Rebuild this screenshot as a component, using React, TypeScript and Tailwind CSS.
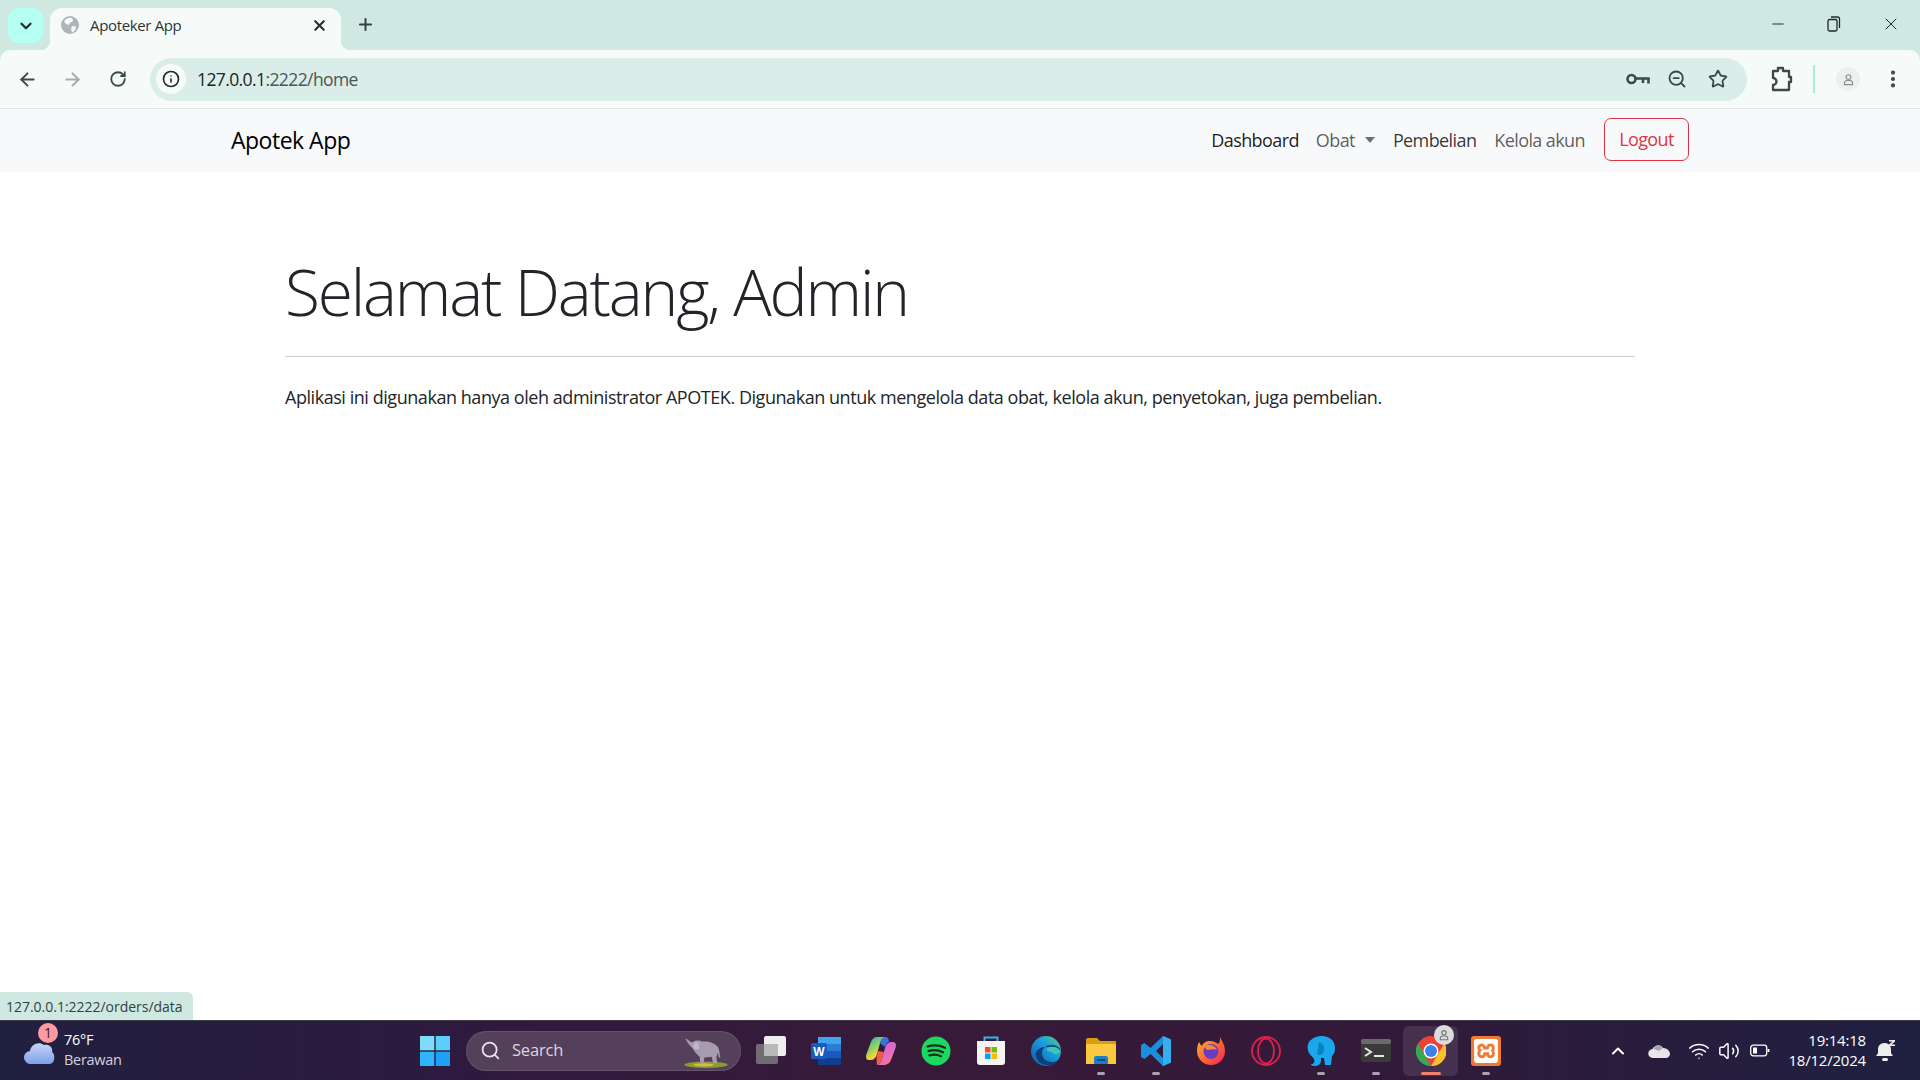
import { Search, ArrowLeft, ArrowRight, RotateCw, Info, ChevronDown, X, Plus, Minus, ZoomOut, Star, EllipsisVertical, ChevronUp, Wifi, Volume2 } from "lucide-react";
import { SiXampp } from "react-icons/si";

const font = "font-['Open_Sans','Liberation_Sans',sans-serif]";

function ChromeTabs() {
  return (
    <div className="relative flex h-[50px] items-start pt-2">
      <button className="ml-2 flex h-[35px] w-[35px] items-center justify-center rounded-[10px] bg-[#b5fff3] text-[#1f2f2c]">
        <ChevronDown size={18} strokeWidth={3} />
      </button>
      <div className="relative ml-[7px] flex h-[42px] w-[291px] items-center rounded-t-[12px] bg-[#f6fbf9] pb-[8px] pl-[11px] pr-3">
        <div className="absolute -left-[10px] bottom-0 h-[10px] w-[10px] bg-[radial-gradient(circle_at_0_0,#cfe8e2_10px,#f6fbf9_10.5px)]" />
        <div className="absolute -right-[10px] bottom-0 h-[10px] w-[10px] bg-[radial-gradient(circle_at_100%_0,#cfe8e2_10px,#f6fbf9_10.5px)]" />
        <svg width="18" height="18" viewBox="0 0 18 18">
          <circle cx="9" cy="9" r="9" fill="#aeb4ba" />
          <path d="M9 1.5 12 3 11.5 6 9 6.5 8 9 5 8 3 5.5 5 3ZM11 10l4 .5-1 4-3 2-1-3.500Z" fill="#f6fbf9" />
        </svg>
        <span className="ml-[11px] flex-1 text-[15px] tracking-[-0.35px] text-[#2b3432]">Apoteker App</span>
        <X size={17} strokeWidth={3} className="mr-[1px] text-[#26302e]" />
      </div>
      <Plus size={19} strokeWidth={2.5} className="ml-[15px] mt-[7px] text-[#33423f]" />
      <div className="ml-auto flex items-center pt-[6px] text-[#1f2a28]">
        <Minus size={18} strokeWidth={1.3} className="mr-[39px]" />
        <svg width="16" height="16" viewBox="0 0 16 16" fill="none" stroke="currentColor" strokeWidth="1.3" className="mr-[39px]">
          <rect x="2" y="3.500" width="9" height="11.500" rx="1.500" />
          <path d="M5 1h6.500A2 2 0 0 1 13.500 3v9" />
        </svg>
        <X size={20} strokeWidth={1.2} className="mr-[19px]" />
      </div>
    </div>
  );
}

function ChromeToolbar() {
  return (
    <div className="flex h-[59px] items-center rounded-t-[10px] border-b border-[#dde7e4] bg-[#f6fbf9] text-[#3a4a47]">
      <ArrowLeft size={21} strokeWidth={2.2} className="ml-[17px]" />
      <ArrowRight size={21} strokeWidth={2.2} className="ml-[24px] text-[#a3adab]" />
      <RotateCw size={18} strokeWidth={2.4} className="ml-[26px]" />
      <div className="ml-[23px] flex h-[43px] w-[1597px] items-center rounded-full bg-[#dbede8] pl-[6px]">
        <div className="flex h-[30px] w-[30px] items-center justify-center rounded-full bg-[#f6fbf9]">
          <Info size={18} strokeWidth={2.2} className="text-[#1f2a28]" />
        </div>
        <span className="ml-[11px] flex-1 text-[17.500px] tracking-[-0.6px] text-[#4a5755]">
          <span className="text-[#1d2422]">127.0.0.1</span>:2222/home
        </span>
        <svg width="24" height="16" viewBox="0 0 24 16" fill="none" stroke="currentColor" strokeWidth="2.600" className="mr-[17px]">
          <circle cx="5.500" cy="8" r="4" />
          <path d="M9.500 7.500H22.500V12.500M17 7.500V12" />
        </svg>
        <ZoomOut size={20} strokeWidth={2.2} className="mr-[21px]" />
        <Star size={20} strokeWidth={2.2} className="mr-[19px]" />
      </div>
      <svg width="24" height="26" viewBox="0 0 24 26" fill="none" stroke="currentColor" strokeWidth="2.300" className="ml-[22px]">
        <path d="M4 5h5V2h5v3h6v6h2v5h-2v8H4v-5a3.500 3.500 0 0 0 0-7Z" strokeLinejoin="round" />
      </svg>
      <div className="ml-[20px] h-[28px] w-[2px] bg-[#a5ece2]" />
      <div className="ml-[21px] flex h-[24px] w-[24px] items-center justify-center rounded-full bg-[#eef0f0]">
        <svg width="11" height="15" viewBox="0 0 16 18" fill="none" stroke="#868d8c" strokeWidth="1.600">
          <circle cx="8" cy="5.500" r="3.500" />
          <path d="M2 16.500v-2a4 4 0 0 1 4-4h4a4 4 0 0 1 4 4v2Z" />
        </svg>
      </div>
      <EllipsisVertical size={22} strokeWidth={2.6} className="ml-[22px]" />
    </div>
  );
}

function Navbar() {
  return (
    <nav className="flex h-[63px] items-center justify-between bg-[#f8f9fa] pl-[231px] pr-[231px]">
      <a className="text-[23px] tracking-[-0.5px] text-black">Apotek App</a>
      <div className="flex items-center text-[18px] tracking-[-0.6px] text-black/65">
        <a className="mb-[1px] text-black/90">Dashboard</a>
        <a className="mb-[1px] ml-[17px] flex items-center">
          Obat
          <span className="ml-[10px] h-0 w-0 border-x-[5.500px] border-t-[6px] border-x-transparent border-t-[#6b6e70]" />
        </a>
        <a className="mb-[1px] ml-[18px] text-black/80">Pembelian</a>
        <a className="mb-[1px] ml-[18px]">Kelola akun</a>
        <button className="mb-[2px] ml-[19px] h-[43px] w-[85px] rounded-[7px] border border-[#dc3545] text-[#dc3545]">Logout</button>
      </div>
    </nav>
  );
}

function StatusBubble() {
  return (
    <div className="absolute bottom-0 left-0 flex h-[28px] w-[193px] items-center rounded-tr-[6px] bg-[#cfe8e2] pl-[6px] text-[14px] tracking-[-0.02px] text-[#33423f]">
      127.0.0.1:2222/orders/data
    </div>
  );
}

// taskbar app icons, simplified from the real logos
function TaskIcon({ children, dot, active }: { children: React.ReactNode; dot?: boolean; active?: boolean }) {
  return (
    <div className={`relative flex h-[50px] w-[55px] items-center justify-center rounded-[6px] ${active ? "bg-white/10" : ""}`}>
      {children}
      {dot && (
        <span className={`absolute bottom-[1px] h-[3px] rounded-full ${active ? "w-[20px] bg-[#f5806a]" : "w-[8px] bg-[#a9a3ad]"}`} />
      )}
    </div>
  );
}

function Elephant() {
  return (
    <svg width="50" height="32" viewBox="0 0 56 40">
      <ellipse cx="28" cy="36" rx="27" ry="4" fill="#8d9a2c" />
      <ellipse cx="25" cy="36" rx="13" ry="2" fill="#d0bd4a" />
      <path d="M2 3c3 1 6 4 9 5 3-3 9-3 12-1 7-1 16 1 20 7 2 3 2 9 3 13h-2l-1-6-2 5 1 8h-5l-2-8-9 1-1 7h-4l-1-8-5-5-4-6C6 11 4 6 2 3Z" fill="#a89caf" />
      <path d="M14 8c4-1 7 3 5 8-2 2-6 0-7-3Z" fill="#c3b5c6" />
    </svg>
  );
}

function Taskbar() {
  return (
    <div className="flex h-[60px] items-center border-t border-[#3b3a44] bg-[linear-gradient(90deg,#20203f_0%,#2f1a3f_25%,#381a38_50%,#33193a_70%,#1f2040_100%)] text-white">
      <div className="relative ml-[24px] flex w-[396px] items-center">
        <svg width="32" height="26" viewBox="0 0 32 26" className="mt-[2px]">
          <defs>
            <linearGradient id="cl" x1="0" y1="0" x2="0" y2="1">
              <stop offset="0" stopColor="#c7d4f5" />
              <stop offset="1" stopColor="#7da2ea" />
            </linearGradient>
          </defs>
          <path d="M7 25a6.500 6.500 0 0 1-1-13C7 5 15 2 20 6c6-1 9 3 8 7 3 1 4 12-3 12Z" fill="url(#cl)" />
        </svg>
        <span className="absolute left-[14px] top-[-7px] flex h-[20px] w-[20px] items-center justify-center rounded-full bg-[#ff9aa2] text-[14px] text-[#3a1a20]">1</span>
        <div className="mb-[2px] ml-[8px] text-[14.500px] leading-[20px] tracking-[-0.3px]">
          <div>76°F</div>
          <div className="text-[#d5d1da]">Berawan</div>
        </div>
      </div>
      <svg width="30" height="30" viewBox="0 0 30 30">
        <rect x="0" y="0" width="14.300" height="14.300" fill="#7fdcf9" />
        <rect x="15.700" y="0" width="14.300" height="14.300" fill="#5fcdf9" />
        <rect x="0" y="15.700" width="14.300" height="14.300" fill="#2fb5fb" />
        <rect x="15.700" y="15.700" width="14.300" height="14.300" fill="#1f9ff5" />
      </svg>
      <div className="ml-[16px] flex h-[40px] w-[275px] items-center overflow-hidden rounded-full border border-white/10 bg-[#54405a] pl-[13px]">
        <Search size={21} strokeWidth={2} className="text-[#e8e4ea]" />
        <span className="ml-[11px] flex-1 text-[16.500px] tracking-[-0.2px] text-[#dcd7df]">Search</span>
        <div className="mr-[9px] mt-[3px]"><Elephant /></div>
      </div>
      <div className="ml-[2px] flex items-center">
        <TaskIcon>
          <svg width="30" height="30" viewBox="0 0 30 30">
            <rect x="8" y="0" width="22" height="20" rx="2" fill="#eee" />
            <rect x="0" y="8" width="22" height="20" rx="2" fill="#7c7a7e" fillOpacity=".85" />
            <rect x="8" y="8" width="14" height="12" fill="#b9b8ba" />
          </svg>
        </TaskIcon>
        <TaskIcon>
          <svg width="30" height="28" viewBox="0 0 30 28">
            <rect x="7" y="0" width="23" height="28" rx="2" fill="#2b7cd3" />
            <rect x="7" y="0" width="23" height="7" fill="#41a5ee" />
            <rect x="7" y="14" width="23" height="7" fill="#185abd" />
            <rect x="7" y="21" width="23" height="7" fill="#103f91" />
            <rect x="0" y="6" width="16" height="16" rx="2" fill="#185abd" />
            <text x="8" y="19" textAnchor="middle" fontFamily="Liberation Sans" fontWeight="700" fontSize="12" fill="#fff">W</text>
          </svg>
        </TaskIcon>
        <TaskIcon>
          <svg width="30" height="28" viewBox="0 0 30 28">
            <defs>
              <linearGradient id="co1" x1="0" y1="0" x2="0.6" y2="1">
                <stop offset="0" stopColor="#2f9fe8" />
                <stop offset=".45" stopColor="#7ed06a" />
                <stop offset=".8" stopColor="#f5d33f" />
                <stop offset="1" stopColor="#f59a3b" />
              </linearGradient>
              <linearGradient id="co2" x1="0.2" y1="0" x2="0.8" y2="1">
                <stop offset="0" stopColor="#c15fe0" />
                <stop offset=".6" stopColor="#e86fc0" />
                <stop offset="1" stopColor="#f5786f" />
              </linearGradient>
            </defs>
            <path d="M11 0h8c-3 1-4 3-5 6l-3 11c-1 4-3 6-6 6H3c-3 0-3.500-3-2.500-6L5 5c1-3 3-5 6-5Z" fill="url(#co1)" />
            <path d="M17 28h-6c3-1 4-3 5-6l3-11c1-4 3-6 6-6h2c3 0 3.500 3 2.500 6L25 23c-1 3-4 5-8 5Z" fill="url(#co2)" />
            <path d="M11 28c3-1 4-3 5-6l2-7-6-1-1 4c-1 3 0 9 0 10Z" fill="#ef5f3f" />
            <path d="M14 6c1-3 2-5 5-6 3 0 4 2 4 5-2 0-3 2-4 5Z" fill="#3a6fe8" />
          </svg>
        </TaskIcon>
        <TaskIcon>
          <svg width="30" height="30" viewBox="0 0 30 30" fill="none">
            <circle cx="15" cy="15" r="14.500" fill="#1ed760" />
            <path d="M6.500 10.500c6-1.800 12-1.400 17.500 1.200M7.500 15c5-1.400 10-1 14.500 1.200M8.500 19.300c4-1 8-.7 11.500 1" stroke="#1b2b1e" strokeWidth="2.300" strokeLinecap="round" />
          </svg>
        </TaskIcon>
        <TaskIcon>
          <svg width="30" height="30" viewBox="0 0 30 30" fill="none">
            <path d="M8.500 5V1.500h13V5" stroke="#33b5ec" strokeWidth="2" />
            <path d="M1 5h28v21a3 3 0 0 1-3 3H4a3 3 0 0 1-3-3Z" fill="#f4f4f4" />
            <rect x="9" y="11" width="5.500" height="5.500" fill="#f25022" />
            <rect x="15.500" y="11" width="5.500" height="5.500" fill="#7fba00" />
            <rect x="9" y="17.500" width="5.500" height="5.500" fill="#00a4ef" />
            <rect x="15.500" y="17.500" width="5.500" height="5.500" fill="#ffb900" />
          </svg>
        </TaskIcon>
        <TaskIcon>
          <svg width="30" height="30" viewBox="0 0 30 30">
            <defs>
              <linearGradient id="ed" x1="0" y1="1" x2="1" y2="0">
                <stop offset="0" stopColor="#0c59a4" />
                <stop offset=".6" stopColor="#1b9de2" />
                <stop offset="1" stopColor="#57d36e" />
              </linearGradient>
            </defs>
            <circle cx="15" cy="15" r="15" fill="url(#ed)" />
            <path d="M30 16c0-4-4-7-9-7-6 0-10 3-10 8 0 5 4 9 10 9 2 0 4-.5 6-2-3 4-8 6-12 5C9 28 5 24 4.500 18 6 13 10 11 14 11c5 0 6 2 7 3 4 0 7 2 9 2Z" fill="#0e3f78" />
            <path d="M16 15c3 0 5 1 6 2 2 3 5 0 8-1-1-3-4-5-8-5-4-1-7 1-6 4Z" fill="#3cc7b0" />
          </svg>
        </TaskIcon>
        <TaskIcon dot>
          <svg width="30" height="26" viewBox="0 0 30 26">
            <path d="M0 2a2 2 0 0 1 2-2h9l3 3h16v4H0Z" fill="#d79f12" />
            <rect x="0" y="6" width="30" height="20" fill="#fbc93f" />
            <path d="M8 26v-6a2 2 0 0 1 2-2h10a2 2 0 0 1 2 2v6Z" fill="#1a80c9" />
            <rect x="11" y="21" width="8" height="2" fill="#0b4a80" />
          </svg>
        </TaskIcon>
        <TaskIcon dot>
          <svg width="30" height="30" viewBox="0 0 30 30">
            <path d="M22 0 30 3.500v23L22 30 9.500 18 3.500 23 0 21V9l3.500-2 6 5ZM22 8l-7 7 7 7Z" fill="#1b8fde" />
            <path d="M22 0 30 3.500v23L22 30Z" fill="#37aef0" />
          </svg>
        </TaskIcon>
        <TaskIcon>
          <svg width="30" height="30" viewBox="0 0 30 30">
            <defs>
              <linearGradient id="ff" x1="0" y1="0" x2="1" y2="1">
                <stop offset="0" stopColor="#ffb52e" />
                <stop offset=".6" stopColor="#ff5a36" />
                <stop offset="1" stopColor="#e81f6a" />
              </linearGradient>
            </defs>
            <path d="M24 1c1 3 5 7 5 14a14 14 0 1 1-28 0C1 11 2 8 3 6c1 2 2 3 3 4 1-3 4-5 8-5 4 0 7 2 8 3 2-1 2-4 2-7Z" fill="url(#ff)" />
            <circle cx="15" cy="15.500" r="7.500" fill="#6a3bc0" />
            <path d="M9 10c4-2 10-1 12 4-1-1-6-1-9 0-2 0-3-2-3-4Z" fill="#f28b3c" />
          </svg>
        </TaskIcon>
        <TaskIcon>
          <svg width="30" height="30" viewBox="0 0 30 30" fill="none" stroke="#e0204c" strokeWidth="1.800">
            <circle cx="15" cy="15" r="14" />
            <ellipse cx="15" cy="15" rx="8" ry="12.500" />
          </svg>
        </TaskIcon>
        <TaskIcon dot>
          <svg width="28" height="30" viewBox="0 0 28 30">
            <path d="M15 0c8 0 13 5 13 12 0 4-1 6-3 8l-1 9h-6l-1-7h-3v3c0 3-3 5-7 5-2 0-3-1-3-2 3 0 4-2 3-5-1-2-3-3-5-6C0 13 0 9 2 6c3-4 8-6 13-6Z" fill="#1ba7ec" />
            <path d="M12 6c4 1 6 5 5 9s-4 5-7 3c1-4 1-8 2-12Z" fill="#0b82c4" />
          </svg>
        </TaskIcon>
        <TaskIcon dot>
          <svg width="30" height="23" viewBox="0 0 30 23">
            <rect width="30" height="23" rx="2" fill="#3a3a3a" />
            <rect width="30" height="5" rx="2" fill="#6a6a6a" />
            <path d="M4 9l6 4-6 4" stroke="#e5e5e5" strokeWidth="2" fill="none" />
            <rect x="13" y="16" width="10" height="2" fill="#e5e5e5" />
          </svg>
        </TaskIcon>
        <TaskIcon dot active>
          <svg width="30" height="30" viewBox="0 0 30 30">
            <circle cx="15" cy="15" r="15" fill="#ea4335" />
            <path d="M15 30A15 15 0 0 1 2 7.500l7.500 13L15 30Z" fill="#34a853" />
            <path d="M15 30l7.500-13 6-9.500A15 15 0 0 1 15 30Z" fill="#fbc02d" />
            <circle cx="15" cy="15" r="7.500" fill="#fff" />
            <circle cx="15" cy="15" r="6" fill="#3b82e8" />
          </svg>
          <span className="absolute right-[4px] top-[-1px] flex h-[20px] w-[20px] items-center justify-center rounded-full bg-[#dcdcdc]">
            <svg width="10" height="12" viewBox="0 0 16 18" fill="none" stroke="#77757a" strokeWidth="1.800">
              <circle cx="8" cy="5.500" r="3.500" />
              <path d="M2 16.500v-2a4 4 0 0 1 4-4h4a4 4 0 0 1 4 4v2Z" />
            </svg>
          </span>
        </TaskIcon>
        <TaskIcon dot>
          <div className="flex h-[30px] w-[30px] items-center justify-center rounded-[3px] bg-[#f07a33] text-white">
            <SiXampp size={24} />
          </div>
        </TaskIcon>
      </div>
      <div className="ml-auto flex items-center pr-[24px]">
        <ChevronUp size={20} strokeWidth={2.4} />
        <svg width="22" height="14" viewBox="0 0 22 14" className="ml-[20px]">
          <path d="M5 14a4.500 4.500 0 0 1-.5-9C6 1.500 12-1 15 4c4 0 7 3 7 6 0 2-2 4-4 4Z" fill="#e8e6ea" />
          <path d="M5.500 5C7 1.500 12-1 15 4l-4 3Z" fill="#a8a5ad" />
        </svg>
        <Wifi size={22} strokeWidth={1.7} className="ml-[18px]" />
        <Volume2 size={22} strokeWidth={1.6} className="ml-[8px]" />
        <svg width="20" height="13" viewBox="0 0 20 12" fill="none" stroke="#fff" strokeWidth="1.300" className="ml-[10px]">
          <rect x=".7" y=".7" width="16" height="10.600" rx="2.500" />
          <rect x="3" y="3" width="4" height="6" fill="#fff" stroke="none" />
          <path d="M18.500 4.500v3" strokeWidth="1.800" />
        </svg>
        <div className="mb-[2px] ml-[6px] w-[90px] text-right text-[15px] leading-[20px] tracking-[-0.2px]">
          <div>19:14:18</div>
          <div>18/12/2024</div>
        </div>
        <svg width="20" height="22" viewBox="0 0 20 22" fill="#eee" className="ml-[10px]">
          <path d="M9 3a6 6 0 0 1 6 6v4l2 3H0l2-3V9a6 6 0 0 1 6-6Z" />
          <rect x="6" y="18" width="6" height="3" rx="1.500" />
          <path d="M13 0h6v1.500l-3.500 3H19V6h-6V4.500L16.500 1.500H13Z" />
        </svg>
      </div>
    </div>
  );
}

export default function App() {
  return (
    <div className={`flex h-screen flex-col overflow-hidden bg-white ${font}`}>
      <div className="bg-[#cfe8e2]">
        <ChromeTabs />
        <ChromeToolbar />
      </div>
      <Navbar />
      <main className="relative flex-1">
        <div className="mx-[285px] pt-[80px]">
          <h1 className="text-[64px] font-light leading-[80px] tracking-[-2.150px] text-[#212529]">Selamat Datang, Admin</h1>
          <hr className="mt-[24px] border-[#cacbcc]" />
          <p className="mt-[28px] text-[18px] leading-[24px] tracking-[-0.45px] text-[#212529]">
            Aplikasi ini digunakan hanya oleh administrator APOTEK. Digunakan untuk mengelola data obat, kelola akun, penyetokan, juga pembelian.
          </p>
        </div>
        <StatusBubble />
      </main>
      <Taskbar />
    </div>
  );
}
